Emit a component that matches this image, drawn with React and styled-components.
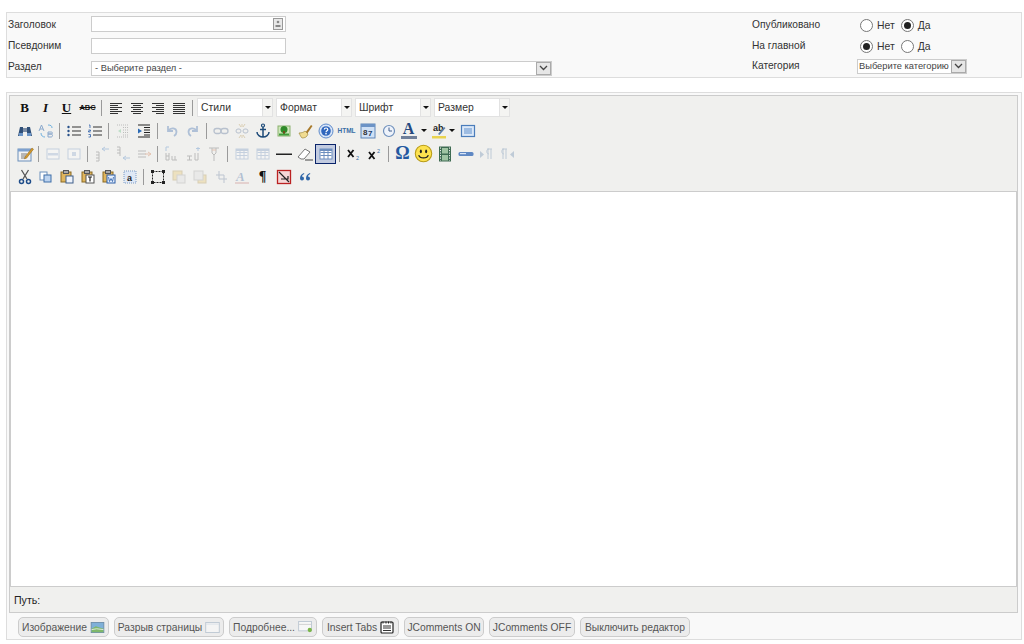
import React from "react";
import styled, { createGlobalStyle } from "styled-components";

const Global = createGlobalStyle`
  html, body { margin: 0; padding: 0; background: #fff; }
  body { font: 11px "Liberation Sans", Arial, sans-serif; color: #333; }
`;
const Page = styled.div`
  width: 1024px; height: 644px; box-sizing: border-box; padding: 12px 2px 0 6px; overflow: hidden;
`;
const Details = styled.section`
  height: 66px; box-sizing: border-box; border: 1px solid #ddd; background: #f9f9f9;
  display: flex; justify-content: space-between; padding: 0 0 0 1px;
`;
const FieldGrid = styled.div`
  display: grid; grid-template-columns: ${p => p.$cols}; grid-auto-rows: ${p => p.$row}px; width: ${p => p.$w}px;
  align-items: center;
`;
const Label = styled.label`
  font-size: 10.2px; color: #333; white-space: nowrap; margin-bottom: ${p => p.$up || 0}px;
`;
const TextBox = styled.div`
  width: 195px; height: 16px; box-sizing: border-box; background: #fff; border: 1px solid #ccc;
  display: flex; justify-content: flex-end; align-items: center; padding-right: 2px;
`;
const FieldIcon = styled.div`
  width: 10px; height: 12px; box-sizing: border-box; border: 1px solid #999; background: #e8e8e8;
  display: flex; align-items: center; justify-content: center;
`;
const SelectBox = styled.div`
  width: ${p => p.$w}px; height: 15px; box-sizing: border-box; background: #fff; border: 1px solid #ccc;
  display: flex; align-items: center; justify-content: space-between; font-size: 9.3px; color: #444;
  padding-left: ${p => p.$pl || 3}px; white-space: nowrap; margin-top: ${p => p.$mt || 0}px;
`;
const SelectArrow = styled.span`
  width: 15px; height: 13px; box-sizing: border-box; border: 1px solid #aaa; background: #e6e6e6;
  display: flex; align-items: center; justify-content: center; flex: none;
`;
const RadioRow = styled.div`
  display: flex; align-items: center; padding-left: 108px; font-size: 10.4px; color: #333; height: 21px; margin-top: 4px;
`;
const Radio = styled.span`
  width: 11px; height: 11px; border-radius: 50%; border: 1px solid #777; background: #fff; position: relative;
  margin-right: 4px; flex: none;
  &::after {
    content: ""; position: absolute; inset: 2px; border-radius: 50%;
    background: ${p => (p.$on ? "#222" : "transparent")};
  }
`;
const RadioText = styled.span` margin-right: 6px; `;
const Editor = styled.section`
  margin-top: 14px; height: 548px; box-sizing: border-box; border: 1px solid #ddd; background: #f9f9f9;
  padding: 2px 2px 0; display: flex; flex-direction: column;
`;
const Frame = styled.div`
  border: 1px solid #ccc; height: 518px; box-sizing: border-box; display: flex; flex-direction: column; background: #f0f0ee;
  margin-right: 1px;
`;
const Toolbar = styled.div` height: 95px; padding: 0 0 0 4px; flex: none; `;
const Row = styled.div` display: flex; align-items: center; height: 23px; `;
const Tool = styled.span`
  width: ${p => p.$w || 21}px; height: 20px; flex: none; display: flex; align-items: center; justify-content: center;
  box-sizing: border-box; color: #111;
  opacity: ${p => (p.$dim ? 0.32 : 1)};
  ${p => p.$active ? "border: 1px solid #0a246a; background: #c2cbe0;" : ""}
`;
const Letter = styled.span`
  font: ${p => p.$i ? "italic" : "normal"} bold ${p => p.$s || 12}px "Liberation Serif", serif;
  text-decoration: ${p => p.$u ? "underline" : p.$x ? "line-through" : "none"};
  color: ${p => p.$c || "#111"};
`;
const SansLetter = styled(Letter)` font-family: "Liberation Sans", sans-serif; `;
const Sep = styled.span`
  width: 7px; height: 16px; flex: none; position: relative;
  &::after { content: ""; position: absolute; left: 3px; top: 0; bottom: 0; width: 1px; background: #9a9a9a; }
`;
const Combo = styled.div`
  display: flex; height: 19px; margin-right: 3px; width: 76px; flex: none;
  &:first-of-type { margin-left: 1px; }
`;
const ComboText = styled.div`
  flex: 1; background: #fff; border: 1px solid #e2e2e2; box-sizing: border-box; font-size: 10.4px; color: #333;
  line-height: 17px; padding-left: 3px;
`;
const ComboArrow = styled.div`
  width: 10px; background: #f4f4f2; border: 1px solid #e2e2e2; border-left: 0; box-sizing: border-box;
  display: flex; align-items: center; justify-content: center;
  &::after { content: ""; border: 3px solid transparent; border-top: 3px solid #111; border-bottom: 0; }
`;
const Caret = styled.span`
  width: 0; height: 0; border: 3px solid transparent; border-top: 3px solid #111; border-bottom: 0; margin-left: 1px;
`;
const Body = styled.div`
  height: 396px; flex: none; background: #fff; border: 1px solid #ccc; box-sizing: border-box;
`;
const PathBar = styled.div`
  flex: 1; display: flex; align-items: center; padding-left: 4px; font-size: 10.6px; color: #222;
`;
const Buttons = styled.div` display: flex; gap: 5px; padding: 4px 0 0 9px; `;
const Btn = styled.button`
  height: 20px; box-sizing: border-box; border: 1px solid #ccc; border-radius: 5px; background: #ececec;
  font: 10.3px "Liberation Sans", Arial, sans-serif; color: #555; padding: 0 2px; display: flex; align-items: center; gap: 3px;
  white-space: nowrap; width: ${p => p.$w}px; justify-content: center;
  svg { flex: none; }
`;
const ColorStack = styled.span` display: inline-flex; flex-direction: column; align-items: center; `;
const BigA = styled(Letter)` line-height: 14px; `;
const ColorBar = styled.span` width: 16px; height: 3px; background: #6f7f99; display: block; `;
const Gap = styled.span` width: 3px; `;
const RightLine = styled.div` display: flex; align-items: center; width: 100%; `;
const RightLabel = styled.div` width: 0; white-space: nowrap; `;
const RightSelect = styled.div`
  display: grid; grid-template-columns: 105px 110px; align-items: center;
`;

const Svg = ({ children, s = 18, vb = "0 0 18 18" }) => (
  <svg width={s} height={s} viewBox={vb} fill="none" aria-hidden="true">{children}</svg>
);
const lines = (ys, xs, c = "#333") => ys.map((y, i) => (
  <rect key={i} x={xs[i % xs.length][0]} y={y} width={xs[i % xs.length][1]} height="1" fill={c} />
));
const Align = ({ kind }) => {
  const w = kind === "l" ? [[3, 12], [3, 8], [3, 12], [3, 8]] : kind === "c" ? [[3, 12], [5, 8], [3, 12], [5, 8]]
    : kind === "r" ? [[3, 12], [7, 8], [3, 12], [7, 8]] : [[3, 12]];
  return <Svg>{lines([4, 6, 8, 10, 12, 14], w, "#333")}</Svg>;
};
const TableIco = ({ c = "#6d8fbf" }) => (
  <Svg><rect x="3" y="4" width="12" height="10" fill="#fff" stroke={c} /><path d="M3.500 7.500h11M3.500 10.500h11M7 5v9M11 5v9" stroke={c} /><rect x="3" y="4" width="12" height="2" fill={c} /></Svg>
);

const I = {
  find: <Svg><path d="M2 14l2-9h3v9zM16 14l-2-9h-3v9z" fill="#2f4f78" /><rect x="7" y="6" width="4" height="4" fill="#7d8ea6" /><rect x="3" y="11" width="4" height="3" fill="#6b95c8" /><rect x="11" y="11" width="4" height="3" fill="#6b95c8" /></Svg>,
  replace: <Svg><path d="M2 9l2.500-6 2.500 6M3 7h3" stroke="#8aa8cc" /><path d="M11 3c3 0 4 1 4 3M4 11c0 3 2 4 4 4" stroke="#6fb0de" /><path d="M11 10h3c2 0 2 2 0 2h-3zm0 2h3c2 0 2 3 0 3h-3z" stroke="#8aa8cc" /></Svg>,
  ul: <Svg><path d="M7 5h9M7 9h9M7 13h9" stroke="#333" /><circle cx="3.500" cy="5" r="1.200" fill="#29518a" /><circle cx="3.500" cy="9" r="1.200" fill="#29518a" /><circle cx="3.500" cy="13" r="1.200" fill="#29518a" /></Svg>,
  ol: <Svg><path d="M7 5h9M7 9h9M7 13h9" stroke="#333" /><path d="M3 3h1v3M2.500 8h2v1h-2v1h2M2.500 12.500h2v2.500h-2" stroke="#2c5ea8" strokeWidth=".8" /></Svg>,
  outdent: <Svg><path d="M3 3h12M9 5.500h6M9 8h6M9 10.500h6M9 13h6M3 15h12" stroke="#555" strokeDasharray="1 1" /><path d="M7 7L4 9l3 2z" fill="#5b7" /></Svg>,
  indent: <Svg><path d="M3 3h12M9 5.500h6M9 8h6M9 10.500h6M9 13h6M3 15h12" stroke="#222" /><path d="M3 6.500L7 9l-4 2.500z" fill="#2a6ab5" /></Svg>,
  undo: <Svg><path d="M5 4v5h5M5.500 8.500c2-3 8-3 8 1.500 0 2-1 3-2.500 4" stroke="#2a5ea8" strokeWidth="1.800" /></Svg>,
  redo: <Svg><path d="M13 4v5H8M12.500 8.500c-2-3-8-3-8 1.500 0 2 1 3 2.500 4" stroke="#2a5ea8" strokeWidth="1.800" /></Svg>,
  link: <Svg><rect x="2" y="6.500" width="7" height="5" rx="2.500" stroke="#44618c" strokeWidth="1.300" /><rect x="9" y="6.500" width="7" height="5" rx="2.500" stroke="#44618c" strokeWidth="1.300" /></Svg>,
  unlink: <Svg><rect x="3" y="7" width="5" height="4" rx="2" stroke="#44618c" /><rect x="10" y="7" width="5" height="4" rx="2" stroke="#44618c" /><path d="M6 2l2 3M12 2l-2 3M6 16l2-3M12 16l-2-3M9 2v3M9 13v3" stroke="#b08a3c" /></Svg>,
  anchor: <Svg><circle cx="9" cy="3.500" r="1.500" stroke="#1d4a78" strokeWidth="1.200" /><path d="M9 5v10M6 7.500h6M3 10c0 3 3 5 6 5s6-2 6-5" stroke="#1d4a78" strokeWidth="1.500" /></Svg>,
  image: <Svg><rect x="3" y="4" width="12" height="10" fill="#cfe8bb" stroke="#8ab06e" /><circle cx="9" cy="7.500" r="3.500" fill="#2f8a2a" /><rect x="8" y="9" width="2" height="3" fill="#734c1c" /><rect x="4" y="11.500" width="10" height="2" fill="#3e9c3a" /></Svg>,
  clean: <Svg><path d="M9 11l6-8 1.500 1-5.500 8z" fill="#a8792a" /><path d="M3 11c3 0 5-1 6-2l3 3c-1 3-3 4-6 4-1-1-2-3-3-5z" fill="#f1dc92" stroke="#a08a3e" strokeWidth=".7" /></Svg>,
  help: <Svg><circle cx="9" cy="9" r="7" fill="#d7e4f7" stroke="#5f8bcb" /><circle cx="9" cy="9" r="4.800" fill="#2f66bd" /><path d="M7.300 7.500c0-2 3.500-2 3.500 0 0 1.300-1.800 1.300-1.800 2.800" stroke="#fff" strokeWidth="1.200" /><rect x="8.300" y="11" width="1.400" height="1.400" fill="#fff" /></Svg>,
  date: <Svg><rect x="2" y="2" width="14" height="14" fill="#cfe0f5" stroke="#5e86b8" /><rect x="2" y="2" width="14" height="3" fill="#6c93c6" /><text x="4" y="13" fontSize="8" fontWeight="700" fontFamily="Liberation Sans" fill="#333">8</text><text x="9" y="14" fontSize="8" fontWeight="700" fontFamily="Liberation Sans" fill="#1d3f6e">7</text></Svg>,
  time: <Svg><circle cx="9" cy="9" r="5.500" fill="#eef3fb" stroke="#6e8fbb" strokeWidth="1.200" /><path d="M9 5.500V9h3" stroke="#44618c" /></Svg>,
  bgcolor: <Svg><text x="3" y="9" fontSize="9" fontWeight="700" fontFamily="Liberation Sans" fill="#222">ab</text><path d="M8 12l6-7 1.500 1-6 7z" fill="#5a7ea8" /><rect x="2" y="14" width="14" height="2.500" fill="#e9d34f" /></Svg>,
  full: <Svg><rect x="2.500" y="3.500" width="13" height="11" fill="#dbe8f8" stroke="#4b7dbb" strokeWidth="1.200" /><rect x="5" y="6" width="8" height="6" fill="#9dbce2" /></Svg>,
  edit: <Svg><rect x="2" y="4" width="13" height="12" fill="#f3f3f3" stroke="#6b8fbb" /><rect x="2" y="4" width="13" height="2.500" fill="#7ea1cf" /><path d="M5 9h6M5 11h5M5 13h4" stroke="#7a7a7a" /><path d="M9 12l7-9 1.500 1.200-7 9-2 .6z" fill="#d59a2c" stroke="#8d6015" strokeWidth=".5" /></Svg>,
  rowprop: <Svg><rect x="3" y="4" width="12" height="10" fill="#fff" stroke="#6d8fbf" /><rect x="4" y="8" width="10" height="2.500" fill="#8ba9d1" /></Svg>,
  cellprop: <Svg><rect x="3" y="4" width="12" height="10" fill="#fff" stroke="#6d8fbf" /><rect x="7" y="7" width="4" height="4" fill="#8ba9d1" /></Svg>,
  rowbefore: <Svg><path d="M3 7h3M6 7v3M3 10h3M3 13h3M6 10v3M3 16h3M6 13v3" stroke="#555" /><path d="M9 4h7M12 2L9 4l3 2" stroke="#3d7ac2" /></Svg>,
  rowafter: <Svg><path d="M3 2h3M6 2v3M3 5h3M6 5v3M3 8h3M6 8v3" stroke="#555" /><path d="M9 13h7M12 11l-3 2 3 2" stroke="#3d7ac2" /></Svg>,
  rowdel: <Svg><path d="M3 6h8M3 9h8M3 12h8" stroke="#555" /><path d="M10 9h6M13 7l3 2-3 2" stroke="#c63" /></Svg>,
  colbefore: <Svg><path d="M3 8v7M6 8v7M3 11h3M3 15h3M9 11v4h5M12 11v4" stroke="#555" /><path d="M3 2v4M3 2h3" stroke="#3d7ac2" /></Svg>,
  colafter: <Svg><path d="M3 11h5M3 15h5M5.500 11v4M11 8v7M14 8v7M11 15h3" stroke="#555" /><path d="M14 2v4M12 3.500h4" stroke="#3d7ac2" /></Svg>,
  coldel: <Svg><path d="M4 3h10M7 3v5l2 2 2-2V3M9 10v6" stroke="#555" /><path d="M7 5h4" stroke="#c63" /></Svg>,
  split: <TableIco />,
  hr: <Svg><rect x="1" y="8.500" width="16" height="1.500" fill="#222" /></Svg>,
  eraser: <Svg><path d="M2 12l7-8 5 3-6 7H5z" fill="#fff" stroke="#777" /><path d="M9 15h8" stroke="#444" /></Svg>,
  sub: <Svg><path d="M3 5l5.500 7M8.500 5L3 12" stroke="#111" strokeWidth="1.800" /><text x="11" y="15" fontSize="5.500" fontFamily="Liberation Sans" fill="#3a6ea5">2</text></Svg>,
  sup: <Svg><path d="M3 7l5.500 7M8.500 7L3 14" stroke="#111" strokeWidth="1.800" /><text x="11" y="8" fontSize="5.500" fontFamily="Liberation Sans" fill="#3a6ea5">2</text></Svg>,
  smile: <Svg s={19}><circle cx="9" cy="9" r="7.800" fill="#fde24f" stroke="#b99c16" /><ellipse cx="6.500" cy="7" rx="1" ry="1.700" fill="#222" /><ellipse cx="11.500" cy="7" rx="1" ry="1.700" fill="#222" /><path d="M4.500 10.500c1 3.500 8 3.500 9 0" stroke="#222" strokeWidth="1.200" /></Svg>,
  film: <Svg><rect x="3" y="1.500" width="12" height="15" fill="#3e6b52" /><rect x="6" y="3" width="6" height="5.500" fill="#9fc4a3" /><rect x="6" y="10" width="6" height="5.500" fill="#9fc4a3" /><path d="M4.500 2.500v13M13.500 2.500v13" stroke="#eee" strokeDasharray="1.200 1.300" /></Svg>,
  pagebreak: <Svg><rect x="1.500" y="7" width="15" height="4" rx="1.500" fill="#5f88c3" /><rect x="3" y="8" width="6" height="1.200" fill="#d8e5f7" /></Svg>,
  ltr: <Svg><path d="M9 4h5M10 4v10M13 4v10M11 4c-3 0-3 5 0 5" stroke="#5a7ea8" /><path d="M2 6v7l4-3.500z" fill="#5a7ea8" /></Svg>,
  rtl: <Svg><path d="M3 4h5M4 4v10M7 4v10M5 4C2 4 2 9 5 9" stroke="#5a7ea8" /><path d="M15 6v7l-4-3.500z" fill="#5a7ea8" /></Svg>,
  cut: <Svg><path d="M5.500 2l5.500 9M12.500 2L7 11" stroke="#555" strokeWidth="1.300" /><circle cx="5.500" cy="13.500" r="2" stroke="#1f4d8a" strokeWidth="1.500" /><circle cx="12.500" cy="13.500" r="2" stroke="#1f4d8a" strokeWidth="1.500" /></Svg>,
  copy: <Svg><rect x="3" y="4" width="7" height="8" fill="#fff" stroke="#6b8fbb" /><rect x="7" y="7" width="7" height="7" fill="#bcd3ef" stroke="#3f6ea8" /></Svg>,
  paste: <Svg><rect x="3" y="4" width="10" height="10" fill="#e0b55c" stroke="#8a6a24" /><rect x="5.500" y="2.500" width="5" height="3" fill="#aaa" stroke="#555" /><rect x="8" y="8" width="7" height="7" fill="#eef3fb" stroke="#3f5e8a" /></Svg>,
  pastetext: <Svg><rect x="3" y="4" width="10" height="10" fill="#e0b55c" stroke="#8a6a24" /><rect x="5.500" y="2.500" width="5" height="3" fill="#aaa" stroke="#555" /><rect x="7" y="7" width="8" height="8" fill="#fff" stroke="#555" /><path d="M9 9h4M11 9v4.500" stroke="#222" strokeWidth="1.200" /></Svg>,
  pasteword: <Svg><rect x="3" y="4" width="10" height="10" fill="#e0b55c" stroke="#8a6a24" /><rect x="5.500" y="2.500" width="5" height="3" fill="#aaa" stroke="#555" /><rect x="7" y="7" width="8" height="8" fill="#e4eefc" stroke="#2c5ea8" /><path d="M8.500 9l1 4.500 1.500-3 1.500 3 1-4.500" stroke="#2c5ea8" strokeWidth=".8" /></Svg>,
  selectall: <Svg><rect x="3" y="3" width="12" height="12" fill="#dfe8f5" stroke="#7b9bc6" strokeDasharray="1 1" /><text x="6" y="12.500" fontSize="9" fontWeight="700" fontFamily="Liberation Sans" fill="#222">a</text></Svg>,
  layer: <Svg><rect x="3.500" y="3.500" width="11" height="11" stroke="#222" strokeDasharray="2 1" /><rect x="2" y="2" width="3" height="3" fill="#222" /><rect x="13" y="2" width="3" height="3" fill="#222" /><rect x="2" y="13" width="3" height="3" fill="#222" /><rect x="13" y="13" width="3" height="3" fill="#222" /></Svg>,
  forward: <Svg><rect x="3" y="3" width="9" height="9" fill="#e8c25f" stroke="#a6893e" /><rect x="7" y="7" width="8" height="8" fill="#ddd" stroke="#999" /></Svg>,
  backward: <Svg><rect x="7" y="7" width="8" height="8" fill="#e8c25f" stroke="#a6893e" /><rect x="3" y="3" width="9" height="9" fill="#ddd" stroke="#999" /></Svg>,
  absolute: <Svg><path d="M7 3v8h8M4 7h8v8" stroke="#556f94" /></Svg>,
  style: <Svg><text x="3" y="13" fontSize="13" fontWeight="700" fontStyle="italic" fontFamily="Liberation Serif" fill="#335f9a">A</text><path d="M2 15h14" stroke="#a33" /></Svg>,
  nbsp: <Svg><rect x="2.500" y="2.500" width="13" height="13" fill="#f5d8d8" stroke="#b22" strokeWidth="1.300" /><path d="M4 4l10 10M6 11h7V8" stroke="#222" strokeWidth="1.200" /></Svg>,
  quote: <Svg><path d="M8 5C5 6 4 8 4 10.500a2 2 0 1 0 2-2c0-1 1-2 2.300-2.500zM14 5c-3 1-4 3-4 5.500a2 2 0 1 0 2-2c0-1 1-2 2.300-2.500z" fill="#2f66a8" /></Svg>,
};

const rows = [
  [["find"], ["replace"], "|", ["ul"], ["ol"], "|", ["outdent", 1], ["indent"], "|", ["undo", 1], ["redo", 1], "|", ["link", 1], ["unlink", 1], ["anchor"], ["image"], ["clean"], ["help"],
    ["html"], ["date"], ["time"], ["color"], ["bg"], ["full"]],
  [["edit"], "|", ["rowprop", 1], ["cellprop", 1], "|", ["rowbefore", 1], ["rowafter", 1], ["rowdel", 1], "|", ["colbefore", 1], ["colafter", 1], ["coldel", 1], "|", ["split", 1], ["split", 1], ["hr"], ["eraser"], ["active"], "|", ["sub"], ["sup"], "|", ["omega"], ["smile"], ["film"], ["pagebreak"], ["ltr", 1], ["rtl", 1]],
  [["cut"], ["copy"], ["paste"], ["pastetext"], ["pasteword"], ["selectall"], "|", ["layer"], ["forward", 1], ["backward", 1], ["absolute", 1], ["style", 1], ["pilcrow"], ["nbsp"], ["quote"]],
];

const ToolItem = ({ name, dim }) => {
  if (name === "html") return <Tool><SansLetter $s={6.500} $c="#3a6ea5">HTML</SansLetter></Tool>;
  if (name === "omega") return <Tool><Letter $s={18} $c="#2458a0">Ω</Letter></Tool>;
  if (name === "pilcrow") return <Tool><Letter $s={14} $c="#111">¶</Letter></Tool>;
  if (name === "color") return <Tool $w={29}><ColorStack><BigA $s={16} $c="#24487e">A</BigA><ColorBar /></ColorStack><Gap /><Caret /></Tool>;
  if (name === "bg") return <Tool $w={29}>{I.bgcolor}<Caret /></Tool>;
  if (name === "active") return <Tool $active><TableIco /></Tool>;
  return <Tool $dim={dim}>{I[name]}</Tool>;
};

const combos = ["Стили", "Формат", "Шрифт", "Размер"];
const Chevron = () => <svg width="9" height="6" viewBox="0 0 9 6" fill="none"><path d="M1 1l3.500 3.500L8 1" stroke="#444" strokeWidth="1.300" /></svg>;
const Person = () => <svg width="6" height="8" viewBox="0 0 6 8"><circle cx="3" cy="2" r="1.300" fill="#888" /><rect x=".5" y="5" width="5" height="2" fill="#888" /></svg>;

const btnIcons = {
  img: <svg width="15" height="11" viewBox="0 0 16 13"><rect x=".5" y=".5" width="15" height="12" fill="#7fb0d8" stroke="#6a8aa6" /><path d="M1 8l5-3 9 3v4H1z" fill="#7fb86a" /><path d="M1 9l6-1 8 1" stroke="#eee" fill="none" /></svg>,
  page: <svg width="15" height="11" viewBox="0 0 17 13"><rect x=".5" y=".5" width="16" height="12" fill="#f4f4f4" stroke="#b9c4d0" /><path d="M1 2.500h15" stroke="#d6dde6" /></svg>,
  more: <svg width="15" height="12" viewBox="0 0 17 14"><rect x=".5" y=".5" width="15" height="11" fill="#f7f7f7" stroke="#b9c4d0" /><path d="M1 4h14" stroke="#ccc" /><circle cx="13.500" cy="10.500" r="2.500" fill="#7ab648" /></svg>,
  tabs: <svg width="14" height="14" viewBox="0 0 14 14"><rect x="1" y="2" width="12" height="11" rx="1" fill="#fff" stroke="#222" strokeWidth="1.200" /><path d="M3 1.500v2M6 1.500v2M8.500 1.500v2M11 1.500v2" stroke="#222" /><path d="M3 6h8M3 8h8M3 10.500h8" stroke="#333" /></svg>,
};

function RightRow({ label, yes }) {
  return (
    <RightLine>
      <RightLabel><Label>{label}</Label></RightLabel>
      <RadioRow>
        <Radio $on={!yes} /><RadioText>Нет</RadioText>
        <Radio $on={!!yes} />Да
      </RadioRow>
    </RightLine>
  );
}

export default function App() {
  return (
    <Page>
      <Global />
      <Details>
        <FieldGrid $cols="83px 1fr" $w={544} $row={22}>
          <Label>Заголовок</Label>
          <TextBox><FieldIcon><Person /></FieldIcon></TextBox>
          <Label $up={2}>Псевдоним</Label>
          <TextBox />
          <Label $up={3}>Раздел</Label>
          <SelectBox $w={461}>- Выберите раздел -<SelectArrow><Chevron /></SelectArrow></SelectBox>
        </FieldGrid>
        <FieldGrid $cols="1fr" $w={269} $row={21}>
          <RightRow label="Опубликовано" yes />
          <RightRow label="На главной" />
          <RightSelect>
            <Label>Категория</Label>
            <SelectBox $w={110} $pl={1} $mt={1}>Выберите категорию<SelectArrow><Chevron /></SelectArrow></SelectBox>
          </RightSelect>
        </FieldGrid>
      </Details>
      <Editor>
        <Frame>
          <Toolbar>
            <Row>
              <Tool><Letter $s={13}>B</Letter></Tool>
              <Tool><Letter $s={13} $i>I</Letter></Tool>
              <Tool><Letter $s={13} $u>U</Letter></Tool>
              <Tool><SansLetter $s={7.500} $x>ABC</SansLetter></Tool>
              <Sep />
              <Tool><Align kind="l" /></Tool>
              <Tool><Align kind="c" /></Tool>
              <Tool><Align kind="r" /></Tool>
              <Tool><Align kind="j" /></Tool>
              <Sep />
              {combos.map(c => <Combo key={c}><ComboText>{c}</ComboText><ComboArrow /></Combo>)}
            </Row>
            {rows.map((r, i) => (
              <Row key={i}>
                {r.map((t, j) => t === "|" ? <Sep key={j} /> : <ToolItem key={j} name={t[0]} dim={!!t[1]} />)}
              </Row>
            ))}
          </Toolbar>
          <Body />
          <PathBar>Путь:</PathBar>
        </Frame>
        <Buttons>
          <Btn $w={91}>Изображение {btnIcons.img}</Btn>
          <Btn $w={110}>Разрыв страницы {btnIcons.page}</Btn>
          <Btn $w={88}>Подробнее... {btnIcons.more}</Btn>
          <Btn $w={77}>Insert Tabs {btnIcons.tabs}</Btn>
          <Btn $w={80}>JComments ON</Btn>
          <Btn $w={86}>JComments OFF</Btn>
          <Btn $w={110}>Выключить редактор</Btn>
        </Buttons>
      </Editor>
    </Page>
  );
}
